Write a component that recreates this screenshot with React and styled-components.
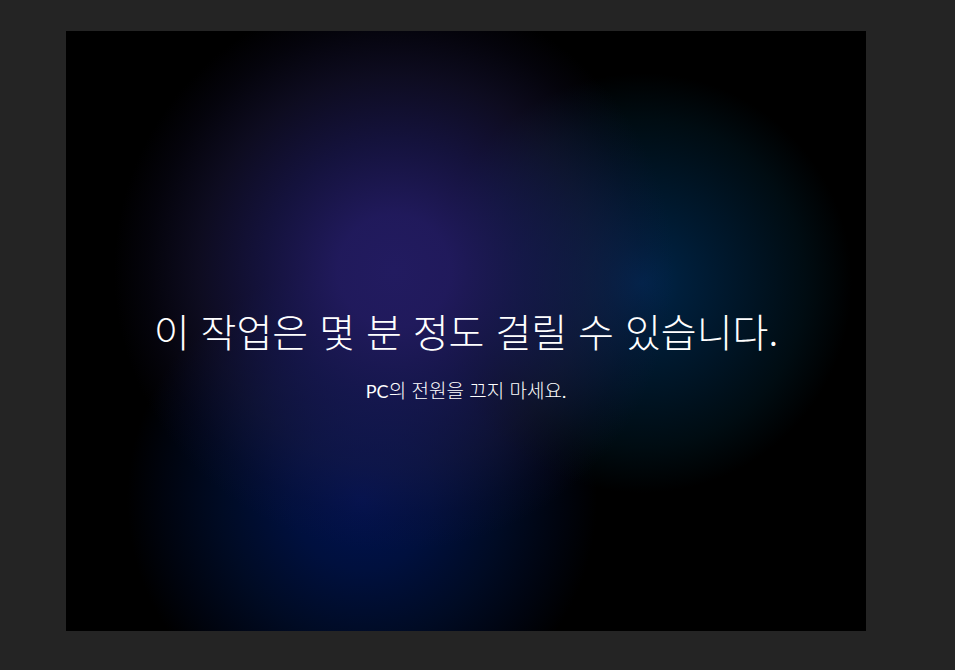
import React from "react";
import styled, { createGlobalStyle } from "styled-components";

const GlobalStyle = createGlobalStyle`
  * { box-sizing: border-box; }
  body { margin: 0; background: #242424; }
`;

const Desktop = styled.div`
  display: flex;
  min-height: 100vh;
  padding: 31px 89px 39px 66px;
  background: #242424;
`;

const SetupScreen = styled.main`
  flex: 1;
  display: flex;
  flex-direction: column;
  align-items: center;
  justify-content: center;
  gap: 24px;
  padding-top: 46px;
  overflow: hidden;
  color: #fff;
  text-align: center;
  font-family: "Noto Sans CJK KR", sans-serif;
  background-color: #000;
  background-image:
    radial-gradient(circle 280px at 41% 40%, rgb(34 27 96) 0%, rgb(34 27 96 / 0.95) 20%, rgb(30 27 90 / 0.68) 46%, rgb(32 28 76 / 0.42) 70%, rgb(24 20 64 / 0.18) 88%, rgb(20 16 50 / 0) 100%),
    radial-gradient(circle 210px at 72% 42%, #00264c 0%, #001f3c 18%, #001526 50%, #000c12 78%, transparent 100%),
    radial-gradient(circle 235px at 37% 78%, #001250 0%, #00103e 30%, #000b24 60%, #00040f 84%, transparent 100%);
`;

const Title = styled.h1`
  margin: 0;
  font-size: 39px;
  font-weight: 300;
  line-height: 48px;
`;

const Note = styled.p`
  margin: 0;
  font-size: 19px;
  font-weight: 300;
  line-height: 24px;
`;

const Latin = styled.span`
  font-family: Lato, sans-serif;
  font-size: 18px;
  font-weight: 400;
`;

export default function App() {
  return (
    <>
      <GlobalStyle />
      <Desktop>
        <SetupScreen lang="ko">
          <Title>이 작업은 몇 분 정도 걸릴 수 있습니다.</Title>
          <Note>
            <Latin>PC</Latin>의 전원을 끄지 마세요<Latin>.</Latin>
          </Note>
        </SetupScreen>
      </Desktop>
    </>
  );
}
